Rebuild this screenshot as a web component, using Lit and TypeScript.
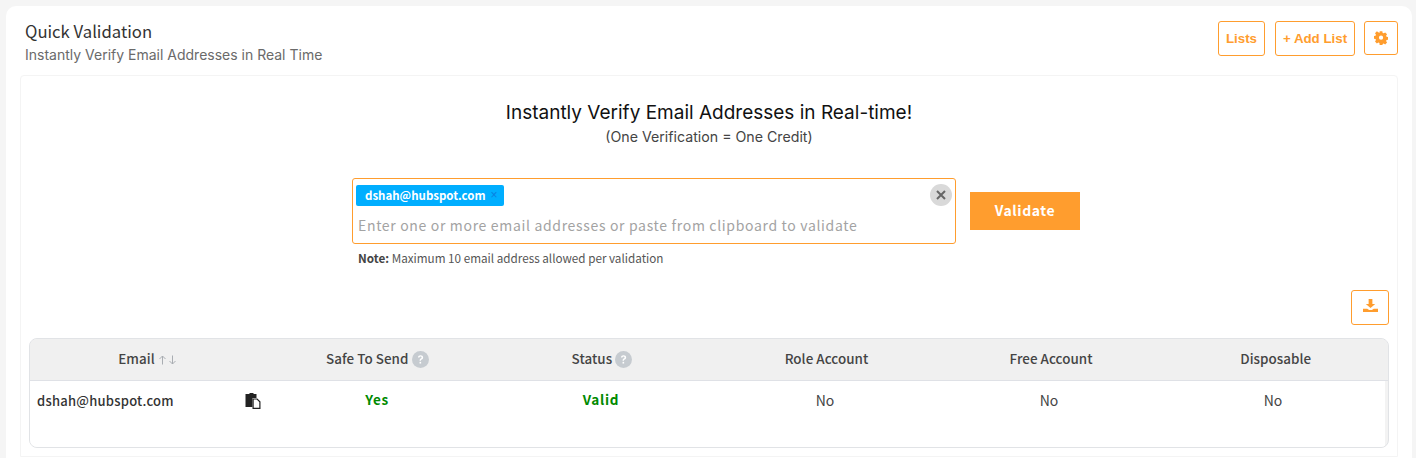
import { LitElement, html, css } from "lit";
import { customElement } from "lit/decorators.js";

const help = html`<svg class="help" viewBox="0 0 16 16" width="17" height="17"><circle cx="8" cy="8" r="8" fill="#c6cbd0"/><path d="M5.600 6.200c.1-1.500 1.100-2.200 2.500-2.200 1.400 0 2.400.8 2.400 2 0 1-.6 1.500-1.300 1.900-.6.4-.8.6-.8 1.300H7.100c0-1.100.3-1.600 1-2.100.5-.3.9-.6.9-1.100 0-.5-.4-.8-.9-.8-.6 0-1 .4-1.100 1z" fill="#fff"/><rect x="7.100" y="10.200" width="1.500" height="1.600" fill="#fff"/></svg>`;

@customElement("app-root")
export class AppRoot extends LitElement {
  static styles = css`
    :host { display: block; width: 1416px; height: 458px; overflow: hidden; background: #f5f5f5; box-sizing: border-box; padding: 6px 4px 0 6px; font-family: "Noto Sans CJK SC", "Noto Sans", sans-serif; color: #333; }
    * { box-sizing: border-box; }
    .card { background: #fff; border-radius: 10px 10px 0 0; height: 460px; padding: 15px 14px 0 14px; }
    .head { display: flex; justify-content: space-between; align-items: flex-start; height: 54px; padding-left: 5px; }
    .title { font: 400 16.7px/22px "Noto Sans CJK SC", sans-serif; color: #333; margin-top: -1px; }
    .sub { font: 400 14px/20px Inter, sans-serif; color: #6a6a6a; margin-top: 3px; }
    .acts { display: flex; gap: 10px; align-items: flex-start; }
    .btn { border: 1px solid #ff9d2e; border-radius: 3px; height: 35px; background: #fff; color: #ff9d2e; font: 700 13.3px/33px "Liberation Sans", sans-serif; display: flex; align-items: center; justify-content: center; }
    .lists { width: 47px; }
    .add { width: 80px; }
    .gear { width: 34px; height: 34px; margin-left: -1px; }
    .panel { border: 1px solid #f4f4f4; border-radius: 4px 4px 0 0; height: 382px; padding: 0 8px; }
    .h1 { text-align: center; font: 400 19px/24px Inter, sans-serif; color: #111; margin-top: 25px; }
    .h2 { text-align: center; font: 400 14.2px/18px Inter, sans-serif; color: #444; margin-top: 3px; }
    .row { display: flex; align-items: center; margin: 32px 0 0 323px; }
    .box { position: relative; width: 604px; height: 66px; border: 1px solid #ff9d2e; border-radius: 3px; padding: 6px 3px; }
    .chip { display: flex; align-items: center; width: 148px; height: 21px; padding-left: 9px; background: #00aeff; border-radius: 2px; color: #fff; font: 700 11.5px/21px "Noto Sans CJK SC", sans-serif; }
    .chip i { font: 400 12px/21px "Liberation Sans", sans-serif; color: #0a7fe0; margin-left: 5px; }
    .ph { font: 400 14px/20px "Noto Sans CJK SC", sans-serif; letter-spacing: 0.67px; color: #a3a3a3; margin: 9px 0 0 2px; }
    .clear { position: absolute; top: 5px; right: 3px; width: 22px; height: 22px; border-radius: 50%; background: #d9d9d9; display: flex; align-items: center; justify-content: center; }
    .go { width: 110px; height: 38px; margin-left: 14px; background: #ff9d2e; color: #fff; font: 700 14px/36px "Noto Sans CJK SC", sans-serif; letter-spacing: 0.6px; text-align: center; }
    .note { font: 400 11.7px/16px "Noto Sans CJK SC", sans-serif; color: #555; margin: 6px 0 0 329px; }
    .note b { color: #444; }
    .dl-row { display: flex; justify-content: flex-end; margin-top: 24px; }
    .dl { width: 38px; height: 35px; padding-bottom: 4px; }
    .table { margin-top: 13px; height: 110px; border: 1px solid #e1e3e6; border-radius: 8px; overflow: hidden; background: #f3f3f3; }
    .heads { display: grid; grid-template-columns: 235px repeat(5, 1fr); }
    .grid { display: grid; grid-template-columns: 235px repeat(5, 224px); width: 1355px; }
    .th { background: #f0f0f0; height: 42px; padding-bottom: 4px; border-bottom: 1px solid #dfe1e6; font: 500 13.4px/20px "Noto Sans CJK SC", sans-serif; letter-spacing: 0.05px; color: #444; display: flex; align-items: center; justify-content: center; gap: 3px; }
    .sort { flex: none; margin-top: 5px; }
    .help { flex: none; margin-top: 3px; }
    .body { background: #fff; height: 66px; }
    .td { height: 40px; font: 400 14px/38px "Noto Sans CJK SC", sans-serif; color: #444; text-align: center; }
    .td.mail { position: relative; text-align: left; padding-left: 7px; font-size: 13px; line-height: 40px; font-weight: 500; color: #333; letter-spacing: 0.25px; }
    .copy { position: absolute; left: 214px; top: 12px; }
    .ok { font-size: 13.5px; line-height: 38px; font-weight: 700; color: #008a00; letter-spacing: 0.7px; margin-top: -1px; }
  `;

  render() {
    return html`<div class="card">
      <div class="head">
        <div>
          <div class="title">Quick Validation</div>
          <div class="sub">Instantly Verify Email Addresses in Real Time</div>
        </div>
        <div class="acts">
          <div class="btn lists">Lists</div>
          <div class="btn add">+ Add List</div>
          <div class="btn gear"><svg viewBox="0 0 16 16" width="14" height="14"><path fill="#ff9d2e" fill-rule="evenodd" d="M6.400 0h3.200l.4 2.100 1.300.6 1.800-1.200 2.300 2.300-1.200 1.800.6 1.300 2.100.4v3.200l-2.100.4-.6 1.300 1.200 1.800-2.300 2.300-1.800-1.200-1.300.6-.4 2.100H6.400L6 14.400l-1.300-.6-1.800 1.200L.6 12.700l1.200-1.800-.6-1.300L-.9 9.200V6l2.100-.4.6-1.300L.6 2.500 2.900.2l1.800 1.200L6 2.100zM8 5.400a2.600 2.600 0 100 5.200 2.600 2.600 0 000-5.200z" transform="translate(.6 .2) scale(.93)"/></svg></div>
        </div>
      </div>
      <div class="panel">
        <div class="h1">Instantly Verify Email Addresses in Real-time!</div>
        <div class="h2">(One Verification = One Credit)</div>
        <div class="row">
          <div class="box">
            <div class="chip">dshah@hubspot.com<i>×</i></div>
            <div class="ph">Enter one or more email addresses or paste from clipboard to validate</div>
            <div class="clear"><svg viewBox="0 0 10 10" width="10" height="10"><path d="M1 1l8 8M9 1l-8 8" stroke="#666" stroke-width="2"/></svg></div>
          </div>
          <div class="go">Validate</div>
        </div>
        <div class="note"><b>Note:</b> Maximum 10 email address allowed per validation</div>
        <div class="dl-row">
          <div class="btn dl"><svg viewBox="0 0 16 16" width="15" height="13" preserveAspectRatio="none"><path fill="#ff9d2e" d="M6 0h4v6h3l-5 5-5-5h3zM0 12h4.500L6.500 13.600h3L11.500 12H16v4H0z"/></svg></div>
        </div>
        <div class="table">
          <div class="heads">
            <div class="th">Email <svg class="sort" viewBox="0 0 19 10" width="19" height="10"><path d="M4.500 9.500V1M1.500 4l3-3 3 3M14.500 .5V9M11.500 6l3 3 3-3" fill="none" stroke="#a9adb2" stroke-width="1"/></svg></div>
            <div class="th">Safe To Send ${help}</div>
            <div class="th">Status ${help}</div>
            <div class="th">Role Account</div>
            <div class="th">Free Account</div>
            <div class="th">Disposable</div>
          </div>
          <div class="grid body">
            <div class="td mail">dshah@hubspot.com
              <svg class="copy" viewBox="0 0 16 16" width="17" height="16"><path fill="#222" d="M1 1h4V0h4v1h3v4H8v9H1z"/><path fill="#fff" stroke="#222" stroke-width="1.200" d="M8.600 6h4l2.800 2.800V15.400H8.600z"/></svg>
            </div>
            <div class="td ok">Yes</div>
            <div class="td ok">Valid</div>
            <div class="td">No</div>
            <div class="td">No</div>
            <div class="td">No</div>
          </div>
        </div>
      </div>
    </div>`;
  }
}
